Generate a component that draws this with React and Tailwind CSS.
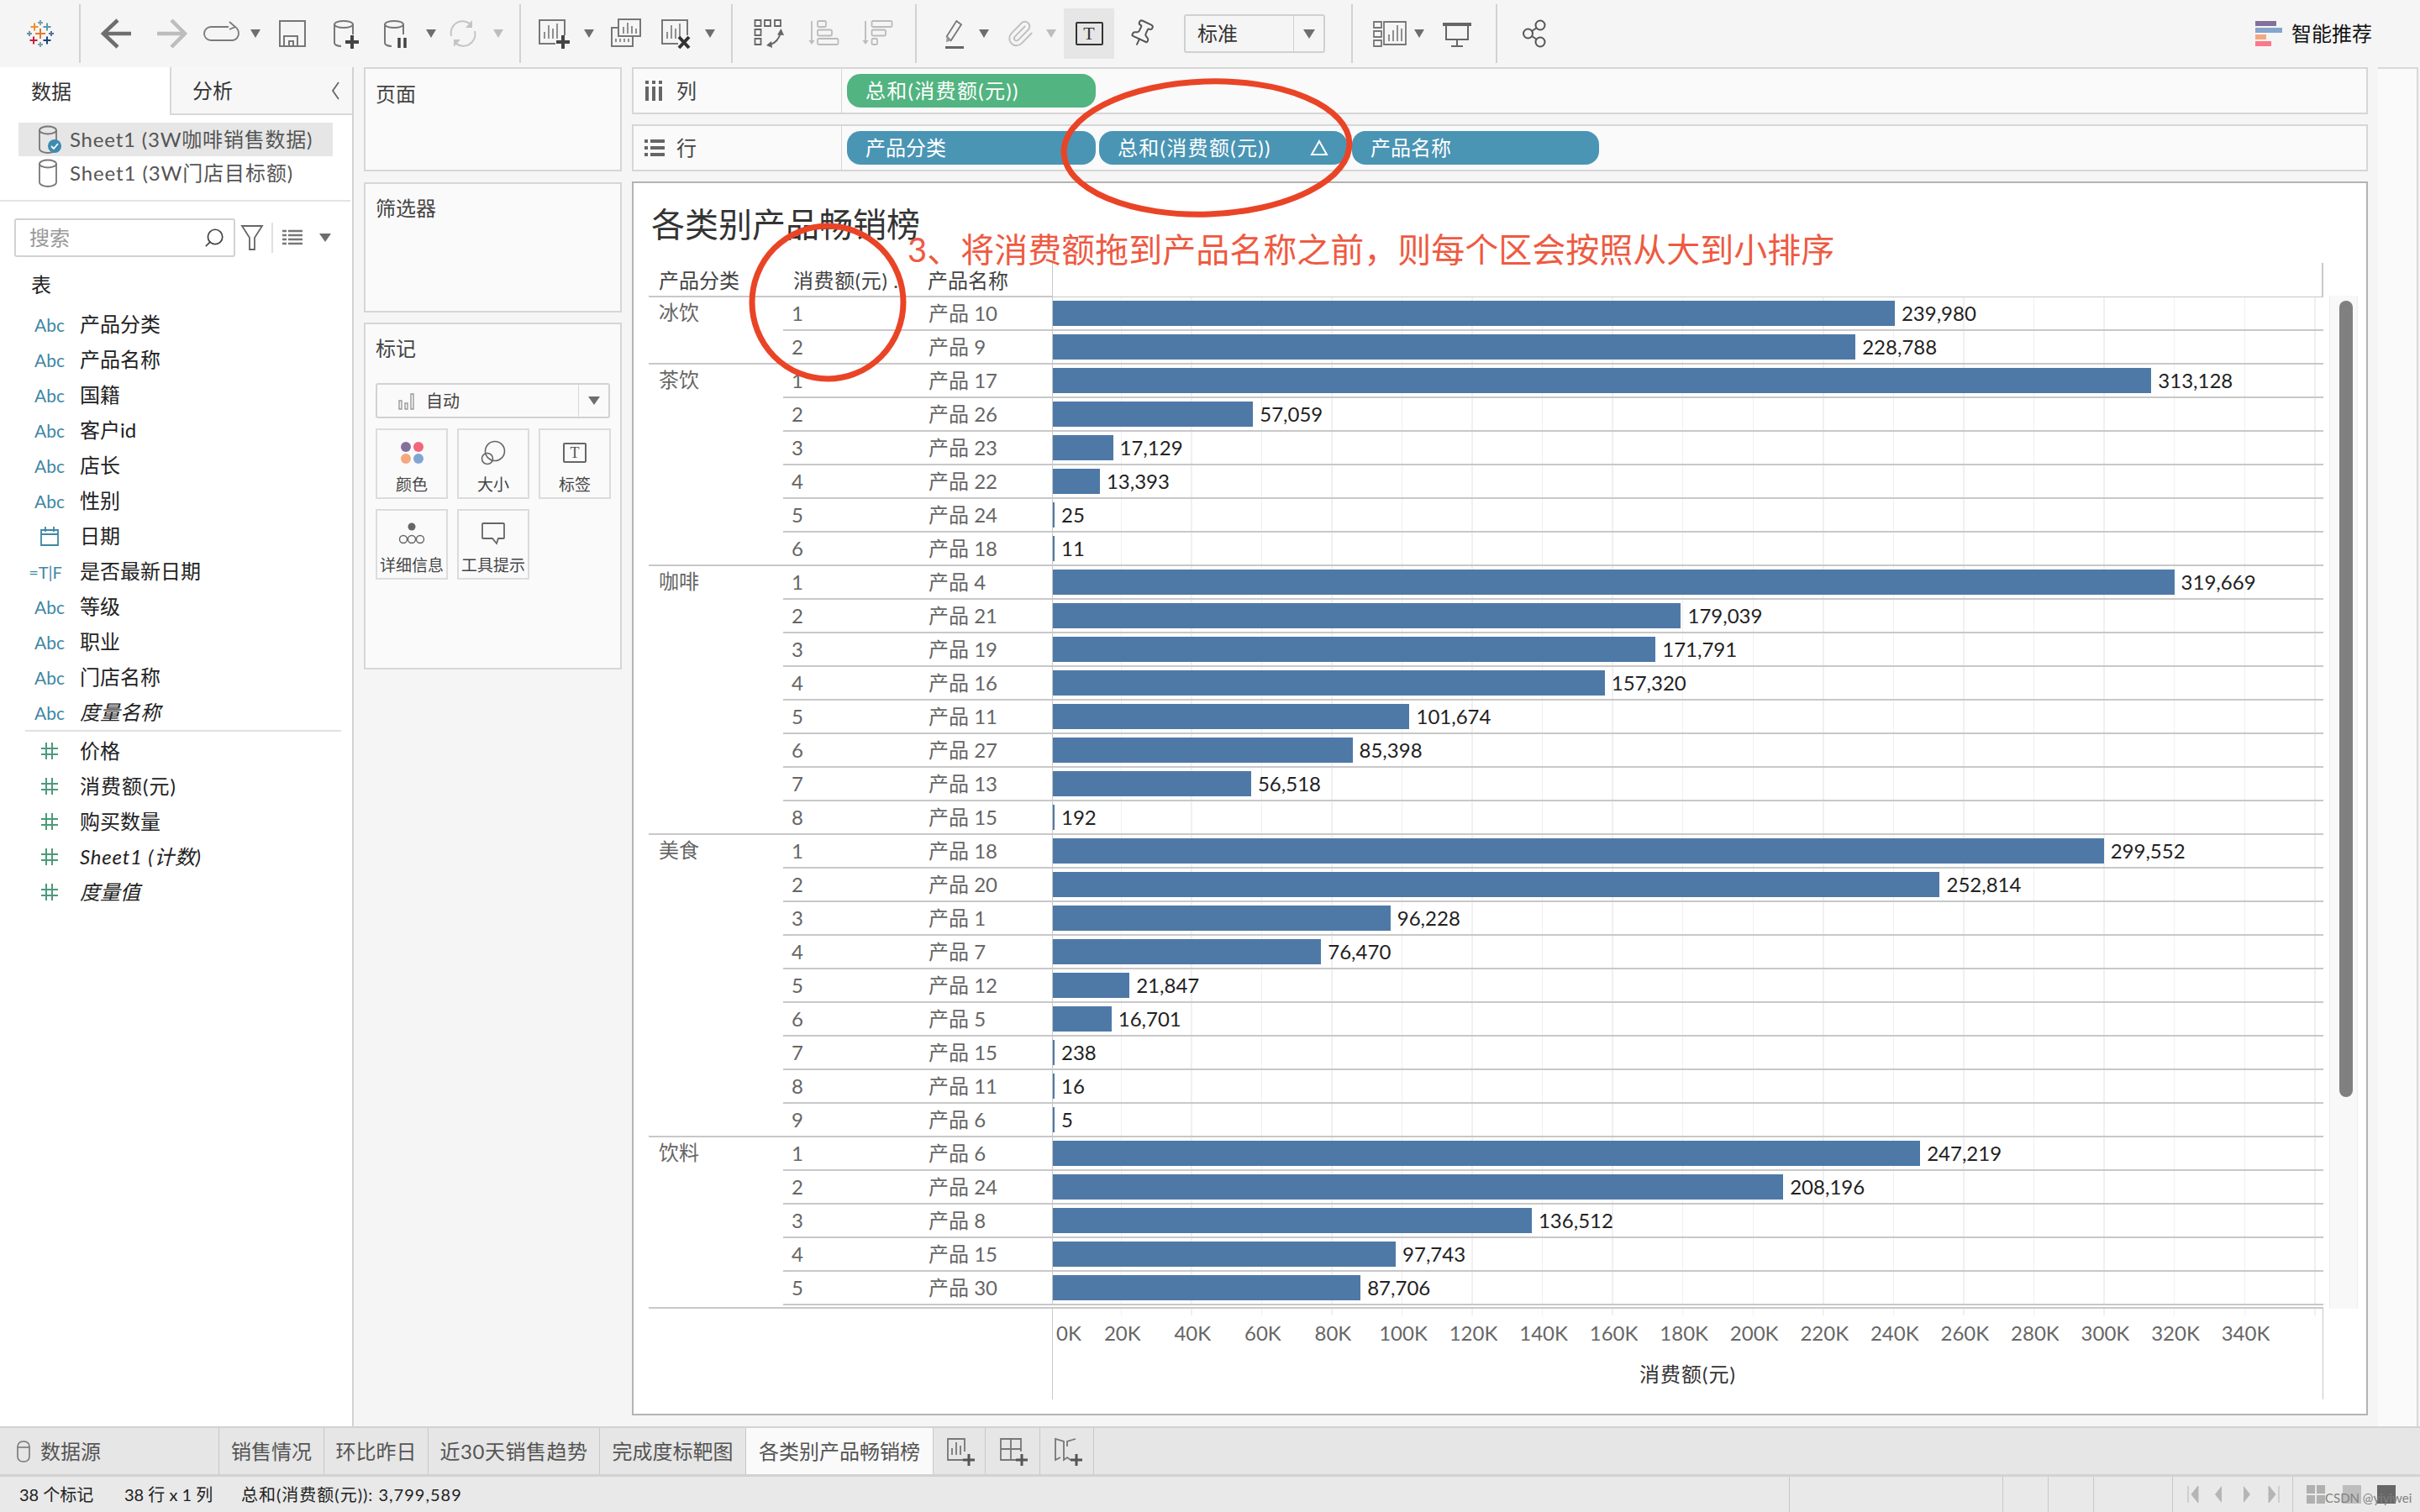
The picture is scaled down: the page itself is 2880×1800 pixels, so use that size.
import React from 'react';
import { Paperclip, Pin, Search } from 'lucide-react';

const groups = [
  { name: '冰饮', rows: [['产品 10', 239980], ['产品 9', 228788]] },
  { name: '茶饮', rows: [['产品 17', 313128], ['产品 26', 57059], ['产品 23', 17129], ['产品 22', 13393], ['产品 24', 25], ['产品 18', 11]] },
  { name: '咖啡', rows: [['产品 4', 319669], ['产品 21', 179039], ['产品 19', 171791], ['产品 16', 157320], ['产品 11', 101674], ['产品 27', 85398], ['产品 13', 56518], ['产品 15', 192]] },
  { name: '美食', rows: [['产品 18', 299552], ['产品 20', 252814], ['产品 1', 96228], ['产品 7', 76470], ['产品 12', 21847], ['产品 5', 16701], ['产品 15', 238], ['产品 11', 16], ['产品 6', 5]] },
  { name: '饮料', rows: [['产品 6', 247219], ['产品 24', 208196], ['产品 8', 136512], ['产品 15', 97743], ['产品 30', 87706]] },
];

const dimensions = ['产品分类', '产品名称', '国籍', '客户id', '店长', '性别', '日期', '是否最新日期', '等级', '职业', '门店名称'];
const ticks = ['20K', '40K', '60K', '80K', '100K', '120K', '140K', '160K', '180K', '200K', '220K', '240K', '260K', '280K', '300K', '320K', '340K'];

const grid = 'bg-[repeating-linear-gradient(90deg,transparent_0,transparent_80.56px,#f0f0f0_80.56px,#f0f0f0_82px,transparent_82px,transparent_83.56px)]';

function Ico({ className = '', children }) {
  return (
    <svg viewBox="0 0 48 48" fill="none" className={`w-12 h-12 shrink-0 ${className}`}>
      {children}
    </svg>
  );
}

function Caret({ className = '', color = 'border-t-[#6e6e6e]' }) {
  return <div className={`w-0 h-0 shrink-0 border-x-[6px] border-x-transparent border-t-[10px] ${color} ${className}`} />;
}

function Sep({ className = '' }) {
  return <div className={`w-[2px] h-[70px] shrink-0 bg-[#d2d2d2] ${className}`} />;
}

function Logo() {
  const cross = (x, y, s, c) => (
    <g key={`${x}-${y}`} stroke={c} strokeWidth="2">
      <path d={`M${x - s} ${y}H${x + s}M${x} ${y - s}V${y + s}`} />
    </g>
  );
  return (
    <Ico className="ml-[24px]">
      {cross(24, 24, 6, '#e8762c')}
      {cross(24, 11, 3, '#7b9fb0')}
      {cross(24, 37, 3, '#7b9fb0')}
      {cross(11, 24, 3, '#6f8fa8')}
      {cross(37, 24, 3, '#5a6f9a')}
      {cross(17, 16, 4.5, '#f28e2b')}
      {cross(32, 16, 4.5, '#5b9aa8')}
      {cross(16, 32, 4.5, '#c72035')}
      {cross(32, 32, 4.5, '#1f447e')}
    </Ico>
  );
}

function Toolbar() {
  return (
    <div className="h-[80px] bg-[#f5f5f5] flex items-center shrink-0">
      <Logo />
      <Sep className="ml-[22px]" />
      <Ico className="ml-[20px]"><path d="M24 8 7 24l17 16M7 24h33" stroke="#6e6e6e" strokeWidth="4.5" /></Ico>
      <Ico className="ml-[16px]"><path d="M24 8l16 16-16 16M40 24H7" stroke="#bdbdbd" strokeWidth="4.5" /></Ico>
      <Ico className="ml-[12px]"><path d="M32 16H11a8 8 0 0 0 0 16h26a8 8 0 0 0 7-8c0-3-1-6-4-8M33 10l7 6-7 3" stroke="#7a7a7a" strokeWidth="1.8" /></Ico>
      <Caret className="ml-[10px]" />
      <Ico className="ml-[14px]">
        <rect x="9" y="9" width="30" height="30" stroke="#777" strokeWidth="2" />
        <path d="M14 39V27h16v12M20 39v-6h5v6" stroke="#777" strokeWidth="2" />
      </Ico>
      <Ico className="ml-[16px]">
        <ellipse cx="21" cy="13" rx="11" ry="4" stroke="#777" strokeWidth="2" />
        <path d="M10 13v22c0 2 3 4 8 4M32 13v12" stroke="#777" strokeWidth="2" />
        <path d="M31 26v16M23 34h16" stroke="#444" strokeWidth="4" />
      </Ico>
      <Ico className="ml-[12px]">
        <ellipse cx="21" cy="13" rx="11" ry="4" stroke="#777" strokeWidth="2" />
        <path d="M10 13v22c0 2 3 4 8 4M32 13v12" stroke="#777" strokeWidth="2" />
        <path d="M27 29v12M34 29v12" stroke="#444" strokeWidth="3.5" />
      </Ico>
      <Caret className="ml-[11px]" />
      <Ico className="ml-[8px]">
        <path d="M10 27a14 14 0 0 1 24-13M38 21a14 14 0 0 1-24 13" stroke="#c4c4c4" strokeWidth="2" />
        <path d="M35 8v9h-8zM13 40v-9h8z" fill="#c4c4c4" />
      </Ico>
      <Caret className="ml-[12px]" color="border-t-[#bdbdbd]" />
      <Sep className="ml-[19px]" />
      <Ico className="ml-[13px]">
        <path d="M28 36H9V8h30v18" stroke="#777" strokeWidth="2" />
        <path d="M15 30V22M20 30V14M25 30V18M30 30V12" stroke="#777" strokeWidth="1.6" />
        <path d="M37 26v16M29 34h16" stroke="#444" strokeWidth="4" />
      </Ico>
      <Caret className="ml-[14px]" />
      <Ico className="ml-[13px]">
        <rect x="16" y="7" width="26" height="20" stroke="#777" strokeWidth="2" />
        <path d="M22 24v-8M27 24V11M32 24v-9M37 24v-6" stroke="#777" strokeWidth="1.6" />
        <path d="M16 17H8v22h25V27" stroke="#777" strokeWidth="2" />
        <path d="M13 34v-4M18 34v-4M23 34v-4M28 34v-4" stroke="#777" strokeWidth="1.6" />
      </Ico>
      <Ico className="ml-[11px]">
        <path d="M28 36H9V8h30v18" stroke="#777" strokeWidth="2" />
        <path d="M15 30V22M20 30V14M25 30V18M30 30V12" stroke="#777" strokeWidth="1.6" />
        <path d="m29 28 12 13M41 28 29 41" stroke="#333" strokeWidth="4" />
      </Ico>
      <Caret className="ml-[12px]" />
      <Sep className="ml-[19px]" />
      <Ico className="ml-[20px]">
        <path d="M6.5 8h7v7h-7zM18 8h7v7h-7zM30 8h7v7h-7zM6.5 19h7v7h-7zM6.5 30h7v7h-7z" stroke="#666" strokeWidth="1.8" rx="1" />
        <path d="M25 37Q34 34 37 23" stroke="#666" strokeWidth="2" />
        <path d="M37.5 18 33 25.5l8 .5zM20 38l6-5 1 8z" fill="#666" />
      </Ico>
      <Ico className="ml-[17px]">
        <path d="M9 9v24" stroke="#bbb" strokeWidth="1.8" />
        <path d="M5.5 32h7L9 37z" fill="#bbb" />
        <rect x="16" y="9" width="10" height="7" rx="1.5" stroke="#bbb" strokeWidth="1.8" />
        <rect x="16" y="19.5" width="17" height="7" rx="1.5" stroke="#bbb" strokeWidth="1.8" />
        <rect x="16" y="30" width="24.5" height="7" rx="1.5" stroke="#bbb" strokeWidth="1.8" />
      </Ico>
      <Ico className="ml-[15px]">
        <path d="M10 9v24" stroke="#bbb" strokeWidth="1.8" />
        <path d="M6.5 32h7L10 37z" fill="#bbb" />
        <rect x="17.5" y="9" width="24" height="7" rx="1.5" stroke="#bbb" strokeWidth="1.8" />
        <rect x="17.5" y="19.5" width="16.5" height="7" rx="1.5" stroke="#bbb" strokeWidth="1.8" />
        <rect x="17.5" y="30" width="6.5" height="7" rx="1.5" stroke="#bbb" strokeWidth="1.8" />
      </Ico>
      <Sep className="ml-[21px]" />
      <Ico className="ml-[21px]">
        <path d="M26.3 9 32 13.3 19.7 32.3l-5-5z" stroke="#777" strokeWidth="1.8" />
        <path d="m14.7 27.3-.7 7 5.700-2" fill="#999" />
        <path d="M13 40.500h22" stroke="#666" strokeWidth="3" />
      </Ico>
      <Caret className="ml-[5px]" />
      <div className="w-12 h-12 ml-[13px] flex items-center justify-center shrink-0">
        <Paperclip size={34} strokeWidth={1.4} className="text-[#c0c0c0]" />
      </div>
      <Caret className="ml-[7px]" color="border-t-[#bdbdbd]" />
      <div className="w-[60px] h-[60px] ml-[9px] bg-[#e6e6e6] flex items-center justify-center shrink-0">
        <div className="w-[33px] h-[28px] border-2 border-[#333] rounded-[2px] flex items-center justify-center text-[22px] leading-none text-[#333] [font-family:'Liberation_Serif',serif]">T</div>
      </div>
      <div className="w-12 h-12 ml-[9px] flex items-center justify-center shrink-0">
        <Pin size={34} strokeWidth={1.4} className="text-[#555] rotate-[25deg]" />
      </div>
      <div className="w-[168px] h-[46px] ml-[26px] border-2 border-[#d0d0d0] rounded-[3px] flex items-center shrink-0">
        <span className="pl-[14px] w-[130px] text-[24px] text-[#333]">标准</span>
        <div className="h-full w-[36px] border-l border-[#d0d0d0] flex items-center justify-center">
          <Caret className="border-x-[7px] border-t-[11px]" />
        </div>
      </div>
      <Sep className="ml-[31px]" />
      <Ico className="ml-[20px]">
        <path d="M5 10h9v7H5zM5 21h9v7H5zM5 32h9v7H5z" stroke="#777" strokeWidth="1.8" />
        <path d="M17 10h26v27H17z" stroke="#777" strokeWidth="1.8" />
        <path d="M23 33v-8M28 33V20M33 33V14M38 33V18" stroke="#777" strokeWidth="1.6" />
      </Ico>
      <Caret className="ml-[5px]" />
      <Ico className="ml-[15px]">
        <path d="M7 13h34" stroke="#666" strokeWidth="4" />
        <path d="M11 15v16h26V15M24 31v8M17 39h14" stroke="#666" strokeWidth="2" />
      </Ico>
      <Sep className="ml-[22px]" />
      <Ico className="ml-[20px]">
        <circle cx="16.500" cy="24" r="5.500" stroke="#555" strokeWidth="2" />
        <circle cx="31" cy="14" r="5.500" stroke="#555" strokeWidth="2" />
        <circle cx="31" cy="34" r="5.500" stroke="#555" strokeWidth="2" />
        <path d="m21 21 6-4M21 27l6 4" stroke="#555" strokeWidth="2" />
      </Ico>
      <div className="ml-auto pr-[57px] flex items-center">
        <div className="flex flex-col gap-[2px] w-[32px]">
          <div className="h-[6px] w-[25px] bg-[#84709a]" />
          <div className="h-[6px] w-[32px] bg-[#85a5cc]" />
          <div className="h-[6px] w-[13px] bg-[#f3a97d]" />
          <div className="h-[6px] w-[19px] bg-[#fc7888]" />
        </div>
        <span className="ml-[11px] text-[24px] text-[#111]">智能推荐</span>
      </div>
    </div>
  );
}

function Cylinder({ checked }) {
  return (
    <svg viewBox="0 0 30 36" fill="none" className="w-[30px] h-[36px] shrink-0">
      <ellipse cx="13" cy="7" rx="10" ry="4.500" stroke="#777" strokeWidth="1.8" />
      <path d="M3 7v22c0 3 5 5 10 5s10-2 10-5V7" stroke="#777" strokeWidth="1.8" />
      {checked && <circle cx="21" cy="26" r="8" fill="#3d8bb0" />}
      {checked && <path d="m17 26 3 3 5-6" stroke="#fff" strokeWidth="1.8" />}
    </svg>
  );
}

function HashIcon() {
  return (
    <svg viewBox="0 0 20 20" fill="none" className="w-5 h-5 mx-auto">
      <path d="M6 0v20M13 0v20M0 7h20M0 14h20" stroke="#4a9b7a" strokeWidth="2" />
    </svg>
  );
}

function Field({ label, icon, italic, className = '' }) {
  return (
    <div className="h-[42px] flex items-center pl-[27px]">
      <div className="w-[64px] text-center text-[#3f87a6] text-[21px] leading-none shrink-0">{icon}</div>
      <span className={`ml-[4px] text-[24px] text-[#222] ${italic ? 'italic' : ''} ${className}`}>{label}</span>
    </div>
  );
}

function DataPanel() {
  return (
    <div className="w-[421px] border-r-2 border-[#d2d2d2] bg-white shrink-0 flex flex-col">
      <div className="h-[57px] flex shrink-0">
        <div className="w-[202px] pl-[37px] flex items-center text-[24px] text-[#333]">数据</div>
        <div className="flex-1 pl-[25px] pr-[14px] bg-[#f7f7f7] border-l-2 border-b-2 border-[#d8d8d8] flex items-center justify-between text-[24px] text-[#333]">
          分析
          <svg viewBox="0 0 12 24" fill="none" className="w-[12px] h-[24px]"><path d="M10 2 3 12l7 10" stroke="#666" strokeWidth="1.8" /></svg>
        </div>
      </div>
      <div className="ml-[22px] mr-[23px] mt-[9px] h-[40px] bg-[#e6e6e6] flex items-center pl-[22px] text-[24px] text-[#555]">
        <Cylinder checked />
        <span className="ml-[9px] whitespace-nowrap tracking-[0.8px]">Sheet1 (3W咖啡销售数据)</span>
      </div>
      <div className="ml-[22px] h-[40px] flex items-center pl-[22px] text-[24px] text-[#555]">
        <Cylinder />
        <span className="ml-[9px] whitespace-nowrap tracking-[0.9px]">Sheet1 (3W门店目标额)</span>
      </div>
      <div className="h-[2px] mt-[12px] mr-[2px] bg-[#e4e4e4]" />
      <div className="mt-[20px] flex items-center">
        <div className="ml-[17px] w-[263px] h-[46px] border-2 border-[#d2d2d2] rounded-[3px] flex items-center justify-between pl-[16px] pr-[10px] text-[24px] text-[#999]">
          搜索
          <Search size={26} strokeWidth={1.6} className="text-[#444] -scale-x-100" />
        </div>
        <svg viewBox="0 0 28 34" fill="none" className="ml-[6px] w-[28px] h-[34px]"><path d="M2 3h24L17 17v14h-6V17z" stroke="#666" strokeWidth="1.8" /></svg>
        <div className="ml-[9px] w-[2px] h-[36px] bg-[#e0e0e0]" />
        <svg viewBox="0 0 26 20" fill="none" className="ml-[10px] w-[26px] h-[20px]"><path d="M1 2h5M8 2h17M1 7h5M8 7h17M1 12h5M8 12h17M1 17h5M8 17h17" stroke="#777" strokeWidth="2.5" /></svg>
        <Caret className="ml-[19px] border-x-[7px]" />
      </div>
      <div className="mt-[17px] pl-[37px] text-[24px] leading-[32px] text-[#222]">表</div>
      <div className="mt-[10px]">
        {dimensions.map(d => (
          <Field
            key={d}
            label={d}
            icon={
              d === '日期' ? (
                <svg viewBox="0 0 22 24" fill="none" className="w-[22px] h-[24px] mx-auto">
                  <path d="M1 5h20v18H1zM1 10h20M6 1v6M16 1v6" stroke="#3f87a6" strokeWidth="1.8" />
                </svg>
              ) : d === '是否最新日期' ? (
                <span className="-ml-[10px] inline-block text-[20px] whitespace-nowrap">=T|F</span>
              ) : 'Abc'
            }
          />
        ))}
        <Field label="度量名称" icon="Abc" italic />
      </div>
      <div className="h-[2px] ml-[30px] mb-[2px] w-[376px] bg-[#e0e0e0]" />
      <Field label="价格" icon={<HashIcon />} />
      <Field label="消费额(元)" icon={<HashIcon />} className="tracking-[1px]" />
      <Field label="购买数量" icon={<HashIcon />} />
      <Field label="Sheet1 (计数)" icon={<HashIcon />} italic className="tracking-[0.8px]" />
      <Field label="度量值" icon={<HashIcon />} italic />
    </div>
  );
}

function Card({ label, className = '', children }) {
  return (
    <div className={`w-[86px] h-[84px] border-2 border-[#dcdcdc] flex flex-col items-center shrink-0 ${className}`}>
      <div className="h-[53px] w-full flex items-center justify-center shrink-0">{children}</div>
      <span className="text-[19px] leading-[24px] text-[#444] whitespace-nowrap">{label}</span>
    </div>
  );
}

function SidePanels() {
  const panel = 'border-2 border-[#d6d6d6] bg-[#fafafa] text-[24px] text-[#444] pl-[12px]';
  return (
    <div className="w-[307px] ml-[12px] shrink-0 flex flex-col">
      <div className={`${panel} h-[124px] pt-[12px]`}>页面</div>
      <div className={`${panel} h-[155px] mt-[13px] pt-[11px]`}>筛选器</div>
      <div className={`${panel} h-[413px] mt-[12px] pt-[11px] pr-[12px]`}>
        标记
        <div className="mt-[23px] h-[42px] border-2 border-[#d2d2d2] rounded-[3px] flex items-center">
          <svg viewBox="0 0 20 24" fill="none" className="ml-[24px] w-[20px] h-[24px]"><path d="M2 12h3v10H2zM9 15h3v7H9zM16 4h3v18h-3z" stroke="#999" strokeWidth="1.4" /></svg>
          <span className="ml-[14px] text-[20px] flex-1">自动</span>
          <div className="w-[36px] h-full border-l border-[#d8d8d8] flex items-center justify-center">
            <Caret className="border-x-[7px] border-t-[10px]" />
          </div>
        </div>
        <div className="mt-[12px] flex gap-[11px]">
          <Card label="颜色">
            <div className="grid grid-cols-2 gap-x-[3px] gap-y-[2px]">
              <div className="w-[12px] h-[12px] rounded-full bg-[#84709a]" />
              <div className="w-[12px] h-[12px] rounded-full bg-[#f4647a]" />
              <div className="w-[12px] h-[12px] rounded-full bg-[#f3a97d]" />
              <div className="w-[12px] h-[12px] rounded-full bg-[#7fa6d0]" />
            </div>
          </Card>
          <Card label="大小" className="w-[84px]">
            <svg viewBox="0 0 30 30" fill="none" className="w-[30px] h-[30px]">
              <circle cx="17" cy="13" r="11.500" stroke="#666" strokeWidth="1.6" />
              <circle cx="8" cy="22" r="6.500" stroke="#666" strokeWidth="1.6" />
            </svg>
          </Card>
          <Card label="标签">
            <div className="w-[28px] h-[24px] border-2 border-[#666] rounded-[2px] flex items-center justify-center text-[18px] leading-none text-[#555] [font-family:'Liberation_Serif',serif]">T</div>
          </Card>
        </div>
        <div className="mt-[12px] flex gap-[11px]">
          <Card label="详细信息">
            <svg viewBox="0 0 32 26" fill="none" className="w-[32px] h-[26px]">
              <circle cx="16" cy="5" r="4.500" fill="#666" />
              <circle cx="6" cy="20" r="4.500" stroke="#666" strokeWidth="1.4" />
              <circle cx="16" cy="20" r="4.500" stroke="#666" strokeWidth="1.4" />
              <circle cx="26" cy="20" r="4.500" stroke="#666" strokeWidth="1.4" />
            </svg>
          </Card>
          <Card label="工具提示" className="w-[84px]">
            <svg viewBox="0 0 30 28" fill="none" className="w-[30px] h-[28px]">
              <path d="M3 2h24a1 1 0 0 1 1 1v16a1 1 0 0 1-1 1h-6l-2 6-5-6H3a1 1 0 0 1-1-1V3a1 1 0 0 1 1-1z" stroke="#666" strokeWidth="1.8" />
            </svg>
          </Card>
        </div>
      </div>
    </div>
  );
}

function Pill({ color, width, className = '', children }) {
  return (
    <div className={`h-[40px] rounded-[16px] pl-[22px] pr-[22px] flex items-center justify-between text-[24px] text-white shrink-0 whitespace-nowrap ${color} ${width} ${className}`}>
      {children}
    </div>
  );
}

function Shelf({ label, icon, className = '', children }) {
  return (
    <div className={`h-[56px] border-2 border-[#d6d6d6] bg-[#fafafa] flex shrink-0 ${className}`}>
      <div className="w-[248px] border-r border-[#d6d6d6] flex items-center pl-[13px] text-[24px] text-[#444]">
        <div className="w-[22px]">{icon}</div>
        <span className="ml-[16px]">{label}</span>
      </div>
      <div className="pl-[6px] flex items-center">{children}</div>
    </div>
  );
}

function Row({ rank, name, value }) {
  const w = Math.max(2, (value * 4.175) / 1000);
  return (
    <div className="h-[40px] flex border-b-2 border-[#c8c8c8]">
      <div className="w-[172px] pl-[10px] leading-[38px] text-[#666] shrink-0">{rank}</div>
      <div className="w-[148px] pl-[1px] leading-[38px] text-[#666] shrink-0 whitespace-nowrap">{name}</div>
      <div className={`w-[1513px] border-l border-[#c8c8c8] flex items-start shrink-0 ${grid}`}>
        <div className="h-[30px] mt-[4px] bg-[#4e79a7] shrink-0" style={{ width: `${w}px` }} />
        <span className="ml-[8px] leading-[38px] text-[#222]">{value.toLocaleString('en-US')}</span>
      </div>
    </div>
  );
}

function Chart() {
  return (
    <div className="h-[1469px] mt-[12px] border-2 border-[#b3b3b3] bg-white text-[24px] shrink-0 flex flex-col">
      <div className="pt-[25px] pl-[21px] h-[95px] text-[40px] leading-[48px] text-[#333] shrink-0">各类别产品畅销榜</div>
      <div className="flex shrink-0">
        <div className="ml-[18px] w-[1993px] shrink-0">
          <div className="flex h-[41px]">
            <div className="w-[480px] flex border-b-2 border-[#c8c8c8] text-[#444] leading-[41px] shrink-0">
              <span className="w-[172px] pl-[12px]">产品分类</span>
              <span className="w-[160px] whitespace-nowrap tracking-[0.6px]">消费额(元) .</span>
              <span>产品名称</span>
            </div>
            <div className="flex-1 border-l border-r-2 border-b border-[#c8c8c8]" />
          </div>
          {groups.map((g, gi) => (
            <div key={g.name} className="flex">
              <div className={`w-[160px] pl-[12px] leading-[36px] text-[#666] shrink-0 ${gi < groups.length - 1 ? 'border-b-2 border-[#c8c8c8]' : ''}`}>
                {g.name}
              </div>
              <div>
                {g.rows.map((r, i) => <Row key={r[0] + i} rank={i + 1} name={r[0]} value={r[1]} />)}
              </div>
            </div>
          ))}
          <div className="h-[2px] mt-[2px] bg-[#c8c8c8]" />
        </div>
        <div className="ml-[7px] mt-[39px] w-[34px] bg-[#f8f8f8] border-x border-[#eeeeee] pt-[6px] pl-[11px] shrink-0">
          <div className="w-[16px] h-[948px] rounded-full bg-[#808080]" />
        </div>
      </div>
      <div className="ml-[498px] w-[1513px] h-[108px] border-x border-[#c8c8c8] shrink-0 text-[#666]">
        <div className={`h-[8px] ${grid}`} />
        <div className="mt-[5px] flex leading-[32px]">
          <div className="w-[41px] pl-[4px] shrink-0">0K</div>
          {ticks.map(t => <div key={t} className="w-[83.56px] text-center shrink-0">{t}</div>)}
        </div>
        <div className="mt-[17px] text-center leading-[32px] text-[#333] tracking-[1px]">消费额(元)</div>
      </div>
    </div>
  );
}

function Tabs() {
  const tab = 'h-full flex items-center justify-center border-r border-[#c8c8c8] text-[24px] text-[#555] whitespace-nowrap shrink-0';
  const addIcon = (d) => (
    <svg viewBox="0 0 40 40" fill="none" className="w-10 h-10">
      <path d={d} stroke="#777" strokeWidth="1.8" />
      <path d="M31 23v14M24 30h14" stroke="#555" strokeWidth="3" />
    </svg>
  );
  return (
    <div className="h-[60px] bg-[#e6e6e6] border-t-2 border-b-[3px] border-[#d2d2d2] flex shrink-0">
      <div className={`${tab} w-[261px] justify-start pl-[20px]`}>
        <svg viewBox="0 0 16 26" fill="none" className="w-[16px] h-[26px]">
          <rect x="1" y="1" width="14" height="24" rx="6" stroke="#777" strokeWidth="1.6" />
          <path d="M1 8h14" stroke="#777" strokeWidth="1.6" />
        </svg>
        <span className="ml-[12px]">数据源</span>
      </div>
      <div className={`${tab} w-[125px]`}>销售情况</div>
      <div className={`${tab} w-[124px]`}>环比昨日</div>
      <div className={`${tab} w-[204px] tracking-[0.5px]`}>近30天销售趋势</div>
      <div className={`${tab} w-[174px]`}>完成度标靶图</div>
      <div className={`${tab} w-[223px] bg-[#fafafa]`}>各类别产品畅销榜</div>
      <div className={`${tab} w-[62px]`}>{addIcon('M24 30H6V5h20v15M11 24v-8M16 24V9M21 24V13')}</div>
      <div className={`${tab} w-[65px]`}>{addIcon('M24 30H6V5h24v15M6 17h24M18 5v25')}</div>
      <div className={`${tab} w-[64px]`}>{addIcon('M24 30l-4-3-4 3V8L6 5v25l6-3M30 5l-10 3v6')}</div>
    </div>
  );
}

function StatusBar() {
  const divider = 'w-[1px] h-full bg-[#c8c8c8] shrink-0';
  return (
    <div className="flex-1 bg-[#e9e9e9] flex items-center text-[20px] text-[#222] whitespace-nowrap relative">
      <span className="ml-[23px] w-[125px] shrink-0">38 个标记</span>
      <span className="w-[139px] shrink-0">38 行 x 1 列</span>
      <span className="w-[1842px] shrink-0 tracking-[1px]">总和(消费额(元)): 3,799,589</span>
      <div className={divider} />
      <div className="w-[253px] shrink-0" />
      <div className={divider} />
      <div className="w-[53px] shrink-0" />
      <div className={divider} />
      <div className="w-[53px] shrink-0" />
      <div className={divider} />
      <div className="w-[93px] shrink-0" />
      <div className={divider} />
      <svg viewBox="0 0 112 24" fill="none" className="ml-[16px] w-[112px] h-[24px] shrink-0">
        <path d="M2 2v20M14 2 6 12l8 10z" fill="#b5b5b5" stroke="#b5b5b5" strokeWidth="1" />
        <path d="M42 2l-8 10 8 10z" fill="#b5b5b5" />
        <path d="M68 2l8 10-8 10z" fill="#b5b5b5" />
        <path d="M110 2v20M98 2l8 10-8 10z" fill="#b5b5b5" stroke="#b5b5b5" strokeWidth="1" />
      </svg>
      <div className="ml-[14px] w-[1px] h-full bg-[#c8c8c8] shrink-0" />
      <div className="ml-[16px] w-[22px] h-[22px] grid grid-cols-2 gap-[2px] shrink-0">
        <div className="bg-[#b0b0b0]" /><div className="bg-[#b0b0b0]" />
        <div className="bg-[#b0b0b0]" /><div className="bg-[#b0b0b0]" />
      </div>
      <div className="ml-[21px] w-[22px] h-[22px] bg-[#bdbdbd] shrink-0" />
      <div className="ml-[19px] w-[22px] h-[22px] bg-[#666] shrink-0" />
      <span className="absolute left-[2767px] top-[15px] text-[15px] leading-[20px] text-[#808080]">CSDN @yiyiwei</span>
    </div>
  );
}

export default function App() {
  return (
    <div className="relative w-[2880px] h-[1800px] overflow-hidden flex flex-col bg-[#f5f5f5] [font-family:Lato,'Noto_Sans_CJK_SC',sans-serif]">
      <Toolbar />
      <div className="h-[1618px] flex shrink-0">
        <DataPanel />
        <SidePanels />
        <div className="w-[2066px] ml-[12px] shrink-0 flex flex-col">
          <Shelf
            label="列"
            icon={
              <svg viewBox="0 0 22 24" fill="none" className="w-[22px] h-[24px]">
                <path d="M3 0v4M11 0v4M19 0v4" stroke="#666" strokeWidth="4" />
                <path d="M3 7v17M11 7v17M19 7v17" stroke="#666" strokeWidth="4" />
              </svg>
            }
          >
            <Pill color="bg-[#52b480]" width="w-[296px]"><span className="tracking-[1.3px]">总和(消费额(元))</span></Pill>
          </Shelf>
          <Shelf
            label="行"
            className="mt-[12px]"
            icon={
              <svg viewBox="0 0 24 20" fill="none" className="w-[24px] h-[20px]">
                <path d="M0 2h4M7 2h17M0 10h4M7 10h17M0 18h4M7 18h17" stroke="#666" strokeWidth="4" />
              </svg>
            }
          >
            <Pill color="bg-[#4a95b4]" width="w-[296px]">产品分类</Pill>
            <Pill color="bg-[#4a95b4]" width="w-[295px]" className="ml-[4px]">
              <span className="tracking-[1.3px]">总和(消费额(元))</span>
              <svg viewBox="0 0 22 20" fill="none" className="w-[22px] h-[20px]"><path d="M11 2 2 18h18z" stroke="#fff" strokeWidth="2" /></svg>
            </Pill>
            <Pill color="bg-[#4a95b4]" width="w-[294px]" className="ml-[6px]">产品名称</Pill>
          </Shelf>
          <Chart />
        </div>
        <div className="ml-[12px] w-[48px] bg-[#fafafa] border-t-2 border-r-2 border-[#d8d8d8] shrink-0" />
      </div>
      <Tabs />
      <StatusBar />
      <svg viewBox="0 0 2880 1800" fill="none" className="absolute inset-0 w-[2880px] h-[1800px] pointer-events-none">
        <ellipse cx="1436" cy="176" rx="170" ry="79" transform="rotate(-2 1436 176)" stroke="#ea4427" strokeWidth="7" />
        <ellipse cx="985" cy="360" rx="90" ry="91" stroke="#ea4427" strokeWidth="7" />
      </svg>
      <span className="absolute left-[1080px] top-[273px] text-[40px] leading-[48px] text-[#ee5a42] whitespace-nowrap">3、将消费额拖到产品名称之前，则每个区会按照从大到小排序</span>
    </div>
  );
}
